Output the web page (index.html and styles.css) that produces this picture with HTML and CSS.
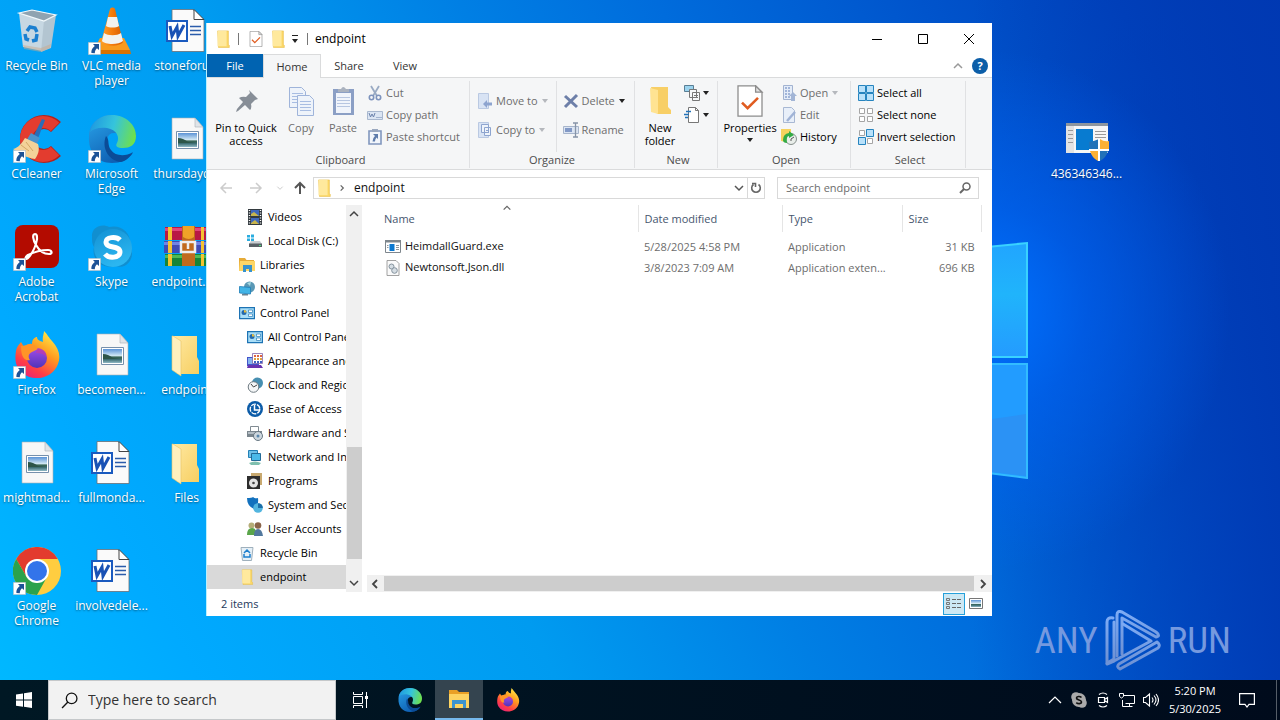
FILE: index.html
```html
<!DOCTYPE html>
<html lang="en">
<head>
<meta charset="UTF-8">
<meta name="viewport" content="width=device-width, initial-scale=1.0">
<title>endpoint</title>
<link rel="stylesheet" href="styles.css">
</head>
<body>

<!-- Icon sprite -->
<svg class="sprite" aria-hidden="true">
  <defs>
    <linearGradient id="gEdgeTop" x1="0" y1="0.3" x2="1" y2="0.5"><stop offset="0" stop-color="#1f9ae0"/><stop offset="0.5" stop-color="#35c4dc"/><stop offset="1" stop-color="#6fe04c"/></linearGradient>
    <linearGradient id="gEdgeMid" x1="0" y1="0" x2="0.6" y2="1"><stop offset="0" stop-color="#2aa4ea"/><stop offset="1" stop-color="#0d5cb0"/></linearGradient>
    <linearGradient id="gFox" x1="0.8" y1="0" x2="0.2" y2="1"><stop offset="0" stop-color="#fff04a"/><stop offset="0.4" stop-color="#ff9a1f"/><stop offset="0.75" stop-color="#ff3d47"/><stop offset="1" stop-color="#e6207e"/></linearGradient>
    <linearGradient id="gFoxGlobe" x1="0" y1="0" x2="0" y2="1"><stop offset="0" stop-color="#a04be8"/><stop offset="1" stop-color="#5034b8"/></linearGradient>
    <linearGradient id="gFolder" x1="0" y1="0" x2="1" y2="1"><stop offset="0" stop-color="#ffe9a3"/><stop offset="1" stop-color="#f7cf62"/></linearGradient>
    <linearGradient id="gSkype" x1="0" y1="0" x2="0.4" y2="1"><stop offset="0" stop-color="#1291d4"/><stop offset="1" stop-color="#2cb6f0"/></linearGradient>
    <linearGradient id="gPhoto" x1="0" y1="0" x2="0" y2="1"><stop offset="0" stop-color="#5b93d6"/><stop offset="0.5" stop-color="#d6ebf5"/><stop offset="0.56" stop-color="#35624f"/><stop offset="0.75" stop-color="#3f6f74"/><stop offset="1" stop-color="#8fb9c6"/></linearGradient>
    <linearGradient id="gCone" x1="0" y1="0" x2="1" y2="0"><stop offset="0" stop-color="#ffa02e"/><stop offset="0.5" stop-color="#f57c0a"/><stop offset="1" stop-color="#d65c00"/></linearGradient>
    <linearGradient id="gMark" x1="0" y1="0" x2="0" y2="1"><stop offset="0" stop-color="#7dabf5"/><stop offset="1" stop-color="#6d90d2"/></linearGradient>
  </defs>

  <symbol id="arrow" viewBox="0 0 13 13"><path fill="#fff" stroke="#9aa7b5" stroke-width=".6" d="M.3.3h12.4v12.4H.3z"/><path fill="#1d5296" d="M5 2h6v6L9 6.200C7.500 7.500 6.800 9 6.800 11.200L3.400 11C3 8 4.500 5.800 6.800 4z"/></symbol>

  <symbol id="recycle" viewBox="0 0 48 48"><path fill="#c6d7e2" d="m6 6 27 8-4 30-19-4z"/><path fill="#b3c5d1" d="m31 13 12-5-5 33-10 4z"/><path fill="#8fa3b1" stroke="#f2f8fb" stroke-width="1.200" d="M6 6 19 3l24 5-12 6z"/><path fill="#c9a98c" d="m10 38 18 3 10-4-1 4-9 4-17-3z" opacity=".5"/><g fill="none" stroke="#1a7fd0" stroke-width="3.500"><path d="m14 24 3-4 5 1 2 4"/><path d="m24 27-1 6-4 1"/><path d="m16 33-3-1-1-5"/></g></symbol>

  <symbol id="vlc" viewBox="0 0 48 48"><path fill="#f89a1c" d="m12 31-6 12h36l-6-12z"/><path fill="#d87200" d="M6 43h36l1 4H5z"/><path fill="url(#gCone)" d="M22 2c1-2 4-2 5 0l8 33c-4 5-18 5-22 0z"/><path fill="#f2f2ee" d="m20 10h9l2 9c-3 2-10 2-13 0zM16 26c4 3 13 3 17 0l2 8c-4 4-18 4-21 0z"/></symbol>

  <symbol id="word" viewBox="0 0 48 48"><path fill="#fafafa" stroke="#6b6f75" stroke-width=".8" d="M9 2.500h21l11 11v31H9z"/><path fill="#fff" stroke="#444" stroke-width="1" d="M31 2.500v10h10z"/><path stroke="#2b5cab" stroke-width="1.300" d="M27 19.500h11M27 23.500h11M27 27.500h11"/><path fill="#fff" stroke="#1a5abf" stroke-width="2" d="M4 14h20v20H4z"/><path fill="none" stroke="#1a52b5" stroke-width="3" d="m7 19 2 10 5-9 1 9 6-11"/></symbol>

  <symbol id="image" viewBox="0 0 48 48"><path fill="#f7f7f7" stroke="#aab0b5" stroke-width=".6" d="M9 3h23l8 9v32H9z"/><path fill="#e0e4e8" stroke="#aab0b5" stroke-width=".6" d="M32 3v9h8z"/><path fill="#fff" stroke="#7690ac" d="M13.500 16.500h22v17h-22z"/><path fill="url(#gPhoto)" d="M15 18h19v14H15z"/><path fill="#2d5548" d="M15 23q5 0 10 4l9 1H15z"/></symbol>

  <symbol id="ccleaner" viewBox="0 0 48 48"><path fill="none" stroke="#b3221c" stroke-width="14" d="M43 12A17 17 0 1 0 43 36"/><path fill="none" stroke="#e33c2f" stroke-width="12" d="M42 12A17 17 0 1 0 42 36"/><path fill="#2a6db8" d="m29 4 3 1-8 21-5-2z"/><path fill="#4b93cc" d="m18 18 9 5-4 7-10-4z"/><path fill="#f3d299" d="m12 23 13 6c2 6 0 11-3 15C13 43 6 38 0 34c5-1 9-6 12-11z"/><path fill="none" stroke="#d3a766" d="m8 30 8 6m-3-9 7 9"/></symbol>

  <symbol id="edge" viewBox="0 0 48 48"><path fill="url(#gEdgeMid)" d="M1 21C1 8 12 0 24 0c10 0 20 8 24 20l-22-2c-7 0-8 8-6 14 4 9 15 13 25 6-5 7-13 10-21 10C9 48 0 37 1 21z"/><path fill="url(#gEdgeTop)" d="M2 17C5 6 13 0 24 0c14 0 24 10 24 21 0 9-6 12-13 12-6 0-8-2-6-5 3-6 0-13-10-15-8-1-14 1-17 4z"/><path fill="#0b4c97" d="M18 21c-5 12 3 25 15 26 5-1 9-5 12-10-8 5-18 4-22-2-4-5-1-10-5-14z"/></symbol>

  <symbol id="acrobat" viewBox="0 0 48 48"><rect x="2" y="2" width="44" height="43" rx="8" fill="#b30b00"/><path fill="none" stroke="#fff" stroke-width="2.200" stroke-linejoin="round" d="M22 11c-3 0-2 6 1 11 4 7 9 9 13 9s3-4-1-4c-7 0-14 2-20 5-4 3-3 5 0 3 4-4 8-12 9-19 0-3 0-5-2-5z"/></symbol>

  <symbol id="skype" viewBox="0 0 48 48"><path fill="#118fd0" d="M4 14C3 4 14 0 21 4c13-3 23 7 21 19 6 10-2 24-14 20C14 47 3 36 6 24 4 21 4 18 4 14z"/><circle cx="25" cy="25" r="19" fill="url(#gSkype)"/><path fill="none" stroke="#fff" stroke-width="5" d="M32 17c-4-4-14-3-14 2 0 7 14 3 14 10 0 6-11 7-15 2"/></symbol>

  <symbol id="winrar" viewBox="0 0 48 48"><path fill="#b91945" d="M2 4h44v13H2z"/><path fill="#e2467b" d="M2 5h44v3H2z"/><path fill="#414bb5" d="M1 18h46v12H1z"/><path fill="#7284e4" d="M1 19h46v3H1z"/><path fill="#178438" d="M2 31h44v12H2z"/><path fill="#4fba55" d="M2 32h44v3H2z"/><path fill="#f4c332" d="M5 4h4v13H5zm0 14h4v12H5zm0 13h4v12H5zM38 4h3v13h-3zm0 14h3v12h-3zm0 13h3v12h-3z"/><path fill="#c16a1d" d="M19 3h13v40H19z"/><path fill="#f0a328" d="M20 3h11v11q-5 4-11 0z"/><path fill="none" stroke="#eee" stroke-width="2.500" d="M18 19h14v10H18zm7 1v6"/></symbol>

  <symbol id="firefox" viewBox="0 0 48 48"><path fill="url(#gFox)" d="M3 20C4 15 6 14 8 11l3 5q4-4 8-3c0-5 3-7 5-7 0 3 3 4 6 5-1-5 1-8 1-11 4 4 5 7 8 10 7 8 9 15 6 23-6 17-31 19-40 4-3-5-3-11-2-17z"/><circle cx="24" cy="27" r="10" fill="url(#gFoxGlobe)"/><path fill="#ff9527" d="M8 15c5 0 9-3 13-1l4 4-6 3c-4 2-4 5-2 8-5 1-9-2-9-14z"/><path fill="#c9389c" d="M24 18c6-1 10 3 9 8-2-3-5-4-10-4z" opacity=".6"/></symbol>

  <symbol id="chrome" viewBox="0 0 48 48"><circle cx="24" cy="24" r="24" fill="#ffcd40"/><path fill="#e33b2e" d="M3.200 12A24 24 0 0 1 44.800 12H24L13.600 30z"/><path fill="#2ba24c" d="M3.200 12 13.600 30 24 36l10-6L24 48A24 24 0 0 1 3.200 12z"/><circle cx="24" cy="24" r="12" fill="#fff"/><circle cx="24" cy="24" r="10" fill="#3374ea"/></symbol>

  <symbol id="folderopen" viewBox="0 0 48 48"><path fill="url(#gFolder)" d="M9 5h25v21l2 4v13H14z"/><path fill="#fff0be" stroke="#e5c264" stroke-width=".6" d="M9 5h1l8 5v35L9 39z"/></symbol>

  <symbol id="setup" viewBox="0 0 48 48"><path fill="#f6f6f6" d="M3 8h42v30H3z"/><path fill="#8e969e" d="M3 8h42v3H3z"/><path fill="#e3e3e3" d="M3 11h8v27H3z"/><path stroke="#9a9a9a" d="M5 15.500h5M5 19.500h5M5 23.500h5M5 27.500h5M32 16.500h11M32 19.500h11M32 22.500h11"/><path fill="#087bd0" d="M13 14h17v21H13z"/><path fill="#2272b8" d="M26 27q6-1 10-3v11h-9z"/><path fill="#fbb034" d="M37 24q4 3 9 2v9h-9zM27 36h8v10q-6-3-8-10z"/><path fill="#fff" d="M35 24h2v22h-2zm-9 10h20v2H26z"/><path fill="#2272b8" d="M37 36h8q-2 7-8 10z"/></symbol>

  <symbol id="folder" viewBox="0 0 16 20"><path fill="#fbd766" stroke="#e5b943" stroke-width=".6" d="M2 1h12v15l1 1v2.500H3z"/><path fill="#ffe99d" d="M2 1h10v17H2z"/></symbol>
  <symbol id="bigfolder" viewBox="0 0 32 32"><path fill="#f8cf66" d="M7 2h17v20l3 3v4H13z"/><path fill="#ffe392" d="m6 3 8 2v24l-7-2z"/></symbol>
  <symbol id="checkpage" viewBox="0 0 16 20"><path fill="#fff" stroke="#8c8c8c" stroke-width=".8" d="M.5.5h11l4 4v15H.5z"/><path fill="#e2e2e2" stroke="#8c8c8c" stroke-width=".8" d="M11.500.5v4h4z"/><path fill="none" stroke="#e05c20" stroke-width="1.600" d="m3 11 3.500 3.500L13 8"/></symbol>

  <symbol id="pin" viewBox="0 0 32 32"><path fill="#878e97" d="m19 5 9 9-3 1-4 4q1 4-1 6l-5-5-7 6-2 1 1-3 6-7-4-4q3-2 7-1l4-4z"/></symbol>
  <symbol id="copy" viewBox="0 0 32 32"><g fill="#eef3fa" stroke="#9fb4da"><path d="M4.500 2.500h12l4 4v16h-16z"/><path d="M12.500 10.500h12l4 4v16h-16z"/></g><path stroke="#a8bde2" d="M7 8.500h11M7 11.500h5M7 14.500h5M7 17.500h5M15 16.500h11M15 19.500h11M15 22.500h11M15 25.500h11"/></symbol>
  <symbol id="paste" viewBox="0 0 32 32"><path fill="#8b9fc5" d="M6 4h21v26H6z"/><path fill="#f0f4fb" d="M9 8h15v20H9z"/><path fill="#aab2bf" d="M11 7V4h3q2-4 5 0h3v3z"/><path stroke="#b7c6e1" d="M10 12.500h13M10 15.500h13M10 18.500h13M10 21.500h13"/></symbol>
  <symbol id="cut" viewBox="0 0 16 16"><path fill="none" stroke="#9aabc4" stroke-width="1.800" d="m4 1 6 10M12 1 6 11"/><g fill="none" stroke="#7d93bd" stroke-width="1.600"><circle cx="4.500" cy="12.500" r="2.200"/><circle cx="11.500" cy="12.500" r="2.200"/></g></symbol>
  <symbol id="path" viewBox="0 0 16 16"><path fill="#dbe5f3" stroke="#a9b8cf" d="M.5 4.500h15v8H.5z"/><path fill="none" stroke="#6b82ac" d="m2 6 1.500 4L5 7l1.500 3L8 6m1.500 4.500h1m1 0h1m1 0h1"/></symbol>
  <symbol id="pasteshort" viewBox="0 0 16 16"><path fill="#f2f6fc" stroke="#8197bd" stroke-width="1.600" d="M2 2h12v13H2z"/><path fill="#9aa8bf" d="M5 0h6v3H5z"/><path fill="#5e7cac" d="M6 5h5v5L9.500 8.500Q8 10 8 12.500H5.500Q5.500 9 8 7z"/></symbol>
  <symbol id="moveto" viewBox="0 0 16 16"><path fill="#d8e3f4" stroke="#bac9e2" d="M1.500.5h10v15h-10z"/><path fill="#8da4cf" d="m6 11 4-4v2.500h5v3h-5V15z"/></symbol>
  <symbol id="copyto" viewBox="0 0 16 16"><path fill="#d8e3f4" stroke="#bac9e2" d="M1.500.5h10v15h-10z"/><path fill="#eef3fa" stroke="#8da4cf" d="M4.500 2.500h7v8h-7zM7.500 5.500h6v8h-6zM9 8.500h3m-3 2h3"/></symbol>
  <symbol id="delete" viewBox="0 0 16 16"><path stroke="#6d7fa8" stroke-width="3" d="m2 3 12 11M14 2 2 14"/></symbol>
  <symbol id="rename" viewBox="0 0 16 16"><path fill="#dce5f3" stroke="#a7b5cb" d="M.5 4.500h15v7H.5z"/><path fill="#8299c6" d="M2 6h7v4H2z"/><path fill="none" stroke="#8794a8" stroke-width="1.300" d="M10 1h5M10 15h5M12.500 1v14"/></symbol>
  <symbol id="newitem" viewBox="0 0 16 16"><path fill="#9bd3ee" stroke="#5a7e94" d="M.5.500h9v6h-9z"/><path fill="#f6f8fa" stroke="#777" d="M5.500 4.500h7v8h-7zM8.500 7.500h7v8h-7zM10 10.500h4m-4 2h4"/></symbol>
  <symbol id="easy" viewBox="0 0 16 16"><path fill="#fff" stroke="#777" d="M4.500.5h7l3 3v12h-10z"/><path fill="none" stroke="#777" d="M11.500.5v3h3"/><path stroke="#2272b8" stroke-width="1.300" d="M2 4.500h5M0 7.500h5M1 10.500h3"/></symbol>
  <symbol id="open" viewBox="0 0 16 16"><path fill="#e4ecf8" stroke="#a2b3d1" d="M2.500.5h9v14h-9z"/><path stroke="#8aa2ce" stroke-width="1.500" stroke-dasharray="2 1" d="M4 3h6M4 6h6M4 9h6M4 12h6"/><path fill="#a2b5d6" d="m12 7 4 4h-2v5h-4v-5H8z"/></symbol>
  <symbol id="edit" viewBox="0 0 16 16"><path fill="#e8eff9" stroke="#a8b8d3" d="M2.500.5h8l3 3v12h-11z"/><path stroke="#a0b3d6" stroke-width="2.500" d="m6 14 8-9"/></symbol>
  <symbol id="history" viewBox="0 0 16 16"><path fill="#f6d25e" d="M0 0h10v14L0 12z"/><circle cx="10" cy="10" r="5.500" fill="#e9eeea" stroke="#868f8c"/><path fill="#33ab45" d="M2 11q0-6 6-7V2l5 4-5 3V7q-3 0-2 7-4 0-4-3z"/><path stroke="#555" d="m10 10 3-2m-3 2v2"/></symbol>
  <symbol id="selall" viewBox="0 0 16 16"><path fill="#b9e1fa" stroke="#2684bf" d="M.5.5h7v7h-7zM8.500.5h7v7h-7zM.5 8.500h7v7h-7zM8.500 8.500h7v7h-7z"/></symbol>
  <symbol id="selnone" viewBox="0 0 16 16"><path fill="#fff" stroke="#a5a5a5" d="M1.500 1.500h5v5h-5zM9.500 1.500h5v5h-5zM1.500 9.500h5v5h-5zM9.500 9.500h5v5h-5z"/></symbol>
  <symbol id="selinv" viewBox="0 0 16 16"><path fill="#fff" stroke="#a5a5a5" d="M1.500 1.500h5v5h-5zM9.500 9.500h5v5h-5z"/><path fill="#b9e1fa" stroke="#2684bf" d="M8.500.5h7v7h-7zM.5 8.500h7v7h-7z"/></symbol>

  <symbol id="videos" viewBox="0 0 16 16"><path fill="#333a3f" d="M1 0h14v16H1z"/><path fill="#3f68bc" d="M4 1h8v6H4zM4 9h8v6H4z"/><path fill="#c8b54c" d="m4 5 3-2 5 4H4zm0 9 4-3 4 4H4z"/><path stroke="#fff" stroke-width="1.400" stroke-dasharray="1 1.500" d="M2.500 1v15M13.500 1v15"/></symbol>
  <symbol id="disk" viewBox="0 0 16 16"><path fill="#2aade0" d="M0 2h3v2.500H0zM4 1.500h3v3H4zM0 5.500h3V8H0zM4 5.500h3v3H4z"/><path fill="#c9cdd1" d="M4 8h9l2 3H2z"/><path fill="#596066" d="M2 10.500h13V14H2z"/><path fill="#4be07a" d="M12 12h2v1h-2z"/></symbol>
  <symbol id="libs" viewBox="0 0 16 16"><path fill="#e6ab38" d="M0 1h6l1.500 2H15v11H0z"/><path fill="#fdd667" d="M1 4h15v10H0z"/><path fill="#3692ce" d="M4 8h9v7h-3v-3H7v3H4z"/></symbol>
  <symbol id="network" viewBox="0 0 16 16"><circle cx="10.500" cy="6" r="5.500" fill="#5a98b5"/><path fill="#a7d9e2" d="m8 2 4-1-1 4z"/><path fill="#42b4e6" stroke="#1c7db8" stroke-width=".8" d="m.5 5.500 11 1v6.500l-11-1z"/><path fill="#6b8492" d="M3 13h6v1.500H3z"/></symbol>
  <symbol id="cpanel" viewBox="0 0 16 16"><path fill="#a9def7" stroke="#1d73b4" stroke-width="1.200" d="M.6 2.600h14.800v11H.6z"/><circle cx="5" cy="7.500" r="2.500" fill="#2469ad"/><path fill="#e9bd3d" d="M5 7.500V5a2.500 2.500 0 0 1 2.500 2.500z"/><path fill="#fff" stroke="#2b7fbb" stroke-width=".7" d="M9.500 5h4v2.500h-4zM9.500 9h4v2.500h-4z"/></symbol>
  <symbol id="appear" viewBox="0 0 16 16"><path fill="#4254ca" d="M0 4h12v9H0z"/><path fill="#86b4ee" d="M1 5h9v6H1z"/><path fill="#fff" stroke="#72539d" stroke-width=".7" d="M5.500.5h10v10h-10z"/><path stroke="#df6542" stroke-width="2" stroke-dasharray="2 1" d="M7 3h8"/><path stroke="#e0a040" stroke-width="2" stroke-dasharray="2 1" d="M7 6h8"/><path stroke="#3c62c4" stroke-width="2" stroke-dasharray="2 1" d="M7 9h8"/><path fill="#6733b0" d="M1 12h13l2 3H0z"/></symbol>
  <symbol id="clock" viewBox="0 0 16 16"><circle cx="10.500" cy="6" r="5.500" fill="#478fb1"/><circle cx="6.500" cy="10" r="5.300" fill="#f4f6f7" stroke="#6f7b82"/><path fill="none" stroke="#444" d="m4 7 2.500 3L10 8"/></symbol>
  <symbol id="ease" viewBox="0 0 16 16"><circle cx="8" cy="8" r="8" fill="#0c5ca8"/><circle cx="8" cy="8" r="4.800" fill="none" stroke="#fff" stroke-width="1.300" stroke-dasharray="5 1"/><path fill="none" stroke="#fff" stroke-width="1.500" d="M7.500 4v5h5"/></symbol>
  <symbol id="hardware" viewBox="0 0 16 16"><path fill="#fff" stroke="#818b92" d="M3.500 1.500h8v5h-8z"/><path fill="#7b868e" d="M0 6h15v6H0z"/><path fill="#b4bdc4" d="M1 7h8v2H1z"/><circle cx="11" cy="11" r="4.500" fill="#ced7de" stroke="#687782"/><circle cx="11" cy="11" r="1.500" fill="#5a87ac"/></symbol>
  <symbol id="netint" viewBox="0 0 16 16"><path fill="#6fc1e9" stroke="#2380b6" d="M1.500 1.500h9v7h-9z"/><path fill="#4bb9e8" stroke="#246b97" d="M4.500 4.500h9v7h-9z"/><path fill="#7fbfae" d="M2 14q6-3 12 0l-2 2H4z"/></symbol>
  <symbol id="programs" viewBox="0 0 16 16"><path fill="#c8a970" d="M4 0h11v12H4z"/><path fill="#2d2d2d" d="M0 3h13v13H0z"/><circle cx="6.500" cy="10" r="4.500" fill="#e4e4e4"/><circle cx="6.500" cy="10" r="1.300" fill="#444"/></symbol>
  <symbol id="syssec" viewBox="0 0 16 16"><path fill="#1271be" d="M0 1q5 0 6-1 2 2 5 1 1 8-4 11Q0 9 0 1z"/><circle cx="11" cy="11" r="4.800" fill="#52b5df"/><path fill="#1d6fa8" d="M11 11V6.200A4.800 4.800 0 0 1 15.800 11z"/></symbol>
  <symbol id="users" viewBox="0 0 16 16"><circle cx="4.500" cy="4.500" r="3" fill="#b5ad78"/><path fill="#5aa54a" d="M0 14q0-7 5-7t4 7z"/><circle cx="11" cy="4.500" r="3.300" fill="#8a6449"/><path fill="#52789e" d="M7 15q0-7 4-7t5 7z"/></symbol>
  <symbol id="rbin" viewBox="0 0 16 16"><path fill="#e6f0f7" stroke="#9fb0bc" d="m2 2.500 12 0-1.500 13h-9z"/><path fill="none" stroke="#1d7fce" stroke-width="1.500" d="m5 8 3-3 3 3m-6 1v3h6V9"/></symbol>
  <symbol id="exe" viewBox="0 0 16 14"><path fill="#fff" stroke="#7e868d" d="M.5.500h15v12H.5z"/><path fill="#7e868d" d="M0 0h16v2.500H0z"/><path fill="#0b78d0" d="M4.500 4h5v7h-5z"/><path stroke="#8f969c" d="M11 5.500h3m-3 2h3m-3 2h3M2 5.500h1.500m-1.500 2h1.500"/></symbol>
  <symbol id="dll" viewBox="0 0 16 16"><path fill="#fafafa" stroke="#8b8b8b" stroke-width=".8" d="M2 .5h9l3 3v12H2z"/><g fill="#d5dde3" stroke="#84929d"><circle cx="6.500" cy="6.500" r="2.500"/><circle cx="9.500" cy="10.500" r="2.800"/></g></symbol>

  <symbol id="chevup" viewBox="0 0 12 12"><path fill="none" stroke="currentColor" stroke-width="1.500" d="m2 8 4-4 4 4"/></symbol>
  <symbol id="chevdown" viewBox="0 0 12 12"><path fill="none" stroke="currentColor" stroke-width="1.500" d="m2 4 4 4 4-4"/></symbol>
  <symbol id="chevleft" viewBox="0 0 12 12"><path fill="none" stroke="currentColor" stroke-width="1.800" d="M8 2 4 6l4 4"/></symbol>
  <symbol id="chevright" viewBox="0 0 12 12"><path fill="none" stroke="currentColor" stroke-width="1.800" d="m4 2 4 4-4 4"/></symbol>
  <symbol id="left" viewBox="0 0 16 16"><path fill="none" stroke="currentColor" stroke-width="1.500" d="M14 8H3m5-5L3 8l5 5"/></symbol>
  <symbol id="right" viewBox="0 0 16 16"><path fill="none" stroke="currentColor" stroke-width="1.500" d="M2 8h11M8 3l5 5-5 5"/></symbol>
  <symbol id="up" viewBox="0 0 16 16"><path fill="none" stroke="currentColor" stroke-width="2" d="M8 14V3M3 8l5-5 5 5"/></symbol>
  <symbol id="mag" viewBox="0 0 16 16"><circle cx="9.500" cy="6.500" r="3.500" fill="none" stroke="currentColor" stroke-width="1.500"/><path stroke="currentColor" stroke-width="2" d="m7 9-4 4"/></symbol>
  <symbol id="taskexp" viewBox="0 0 24 24"><path fill="#e9a026" d="M2 3h8l2 2h10v4H2z"/><path fill="#fdd361" d="M2 7h20v14H2z"/><path fill="#3b93cf" d="M5 13h14v8h-3v-4H8v4H5z"/></symbol>
</svg>

<main class="desktop">
  <svg class="wall-logo" viewBox="0 0 36 238" aria-hidden="true">
    <defs><linearGradient id="gPane" x1="0" y1="0" x2="0" y2="1"><stop offset="0" stop-color="#21a5ff"/><stop offset="0.450" stop-color="#20b4fb"/><stop offset="1" stop-color="#249bff"/></linearGradient></defs>
    <path fill="url(#gPane)" stroke="#39d2ff" stroke-width="2" d="M-4 6 35 2v114H-4z"/>
    <path fill="#229cff" stroke="#32bcff" stroke-width="2" d="M-4 123h39v114l-39-5z"/>
    <path fill="#2b92f5" d="M0 178 34 173v62l-34-4z"/>
  </svg>

  <div class="icons">
    <a class="icon" href="#"><svg><use href="#recycle"/></svg><span>Recycle Bin</span></a>
    <a class="icon shortcut" href="#"><svg><use href="#ccleaner"/></svg><svg class="arrow"><use href="#arrow"/></svg><span>CCleaner</span></a>
    <a class="icon shortcut" href="#"><svg><use href="#acrobat"/></svg><svg class="arrow"><use href="#arrow"/></svg><span>Adobe Acrobat</span></a>
    <a class="icon shortcut" href="#"><svg><use href="#firefox"/></svg><svg class="arrow"><use href="#arrow"/></svg><span>Firefox</span></a>
    <a class="icon" href="#"><svg><use href="#image"/></svg><span>mightmad...</span></a>
    <a class="icon shortcut" href="#"><svg><use href="#chrome"/></svg><svg class="arrow"><use href="#arrow"/></svg><span>Google Chrome</span></a>

    <a class="icon shortcut" href="#"><svg><use href="#vlc"/></svg><svg class="arrow"><use href="#arrow"/></svg><span>VLC media player</span></a>
    <a class="icon shortcut" href="#"><svg><use href="#edge"/></svg><svg class="arrow"><use href="#arrow"/></svg><span>Microsoft Edge</span></a>
    <a class="icon shortcut" href="#"><svg><use href="#skype"/></svg><svg class="arrow"><use href="#arrow"/></svg><span>Skype</span></a>
    <a class="icon" href="#"><svg><use href="#image"/></svg><span>becomeen...</span></a>
    <a class="icon" href="#"><svg><use href="#word"/></svg><span>fullmonda...</span></a>
    <a class="icon" href="#"><svg><use href="#word"/></svg><span>involvedele...</span></a>

    <a class="icon" href="#"><svg><use href="#word"/></svg><span>stoneforu...</span></a>
    <a class="icon" href="#"><svg><use href="#image"/></svg><span>thursdayd...</span></a>
    <a class="icon" href="#"><svg><use href="#winrar"/></svg><span>endpoint.zip</span></a>
    <a class="icon" href="#"><svg><use href="#folderopen"/></svg><span>endpoint</span></a>
    <a class="icon" href="#"><svg><use href="#folderopen"/></svg><span>Files</span></a>
    <a class="icon sample" href="#"><svg><use href="#setup"/></svg><span>436346346...</span></a>
  </div>

  <!-- Explorer window -->
  <section class="window">
    <header class="titlebar">
      <svg class="i18"><use href="#folder"/></svg>
      <i class="bar"></i>
      <button aria-label="Properties"><svg class="i16"><use href="#checkpage"/></svg></button>
      <button aria-label="New folder"><svg class="i18"><use href="#folder"/></svg></button>
      <button class="customize" aria-label="Customize"><i class="caret"></i></button>
      <i class="bar"></i>
      <h1>endpoint</h1>
      <div class="controls">
        <button aria-label="Minimize"><svg viewBox="0 0 12 12"><path stroke="#000" d="M1 6.500h10"/></svg></button>
        <button aria-label="Maximize"><svg viewBox="0 0 12 12"><path fill="none" stroke="#000" d="M1.500 1.500h9v9h-9z"/></svg></button>
        <button aria-label="Close"><svg viewBox="0 0 12 12"><path stroke="#000" d="m1 1 10 10M11 1 1 11"/></svg></button>
      </div>
    </header>

    <nav class="tabs">
      <button class="tab file">File</button>
      <button class="tab active">Home</button>
      <button class="tab">Share</button>
      <button class="tab">View</button>
      <button class="collapse" aria-label="Collapse ribbon"><svg class="i12"><use href="#chevup"/></svg></button>
      <button class="help" aria-label="Help">?</button>
    </nav>

    <div class="ribbon">
      <div class="group clipboard">
        <div class="tools">
          <button class="big wide"><svg><use href="#pin"/></svg>Pin to Quick access</button>
          <button class="big off"><svg><use href="#copy"/></svg>Copy</button>
          <button class="big off"><svg><use href="#paste"/></svg>Paste</button>
          <div class="stack">
            <button class="small off"><svg><use href="#cut"/></svg>Cut</button>
            <button class="small off"><svg><use href="#path"/></svg>Copy path</button>
            <button class="small off"><svg><use href="#pasteshort"/></svg>Paste shortcut</button>
          </div>
        </div>
        <h2>Clipboard</h2>
      </div>
      <div class="group organize">
        <div class="tools">
          <div class="stack loose">
            <button class="small off"><svg><use href="#moveto"/></svg>Move to<i class="caret"></i></button>
            <button class="small off"><svg><use href="#copyto"/></svg>Copy to<i class="caret"></i></button>
          </div>
          <div class="stack loose ruled">
            <button class="small off"><svg><use href="#delete"/></svg>Delete<i class="caret dark"></i></button>
            <button class="small off"><svg><use href="#rename"/></svg>Rename</button>
          </div>
        </div>
        <h2>Organize</h2>
      </div>
      <div class="group new">
        <div class="tools">
          <button class="big"><svg><use href="#bigfolder"/></svg>New folder</button>
          <div class="stack">
            <button class="small tight" aria-label="New item"><svg><use href="#newitem"/></svg><i class="caret"></i></button>
            <button class="small tight" aria-label="Easy access"><svg><use href="#easy"/></svg><i class="caret"></i></button>
          </div>
        </div>
        <h2>New</h2>
      </div>
      <div class="group open">
        <div class="tools">
          <button class="big props"><svg><use href="#checkpage"/></svg>Properties<i class="caret"></i></button>
          <div class="stack">
            <button class="small off"><svg><use href="#open"/></svg>Open<i class="caret"></i></button>
            <button class="small off"><svg><use href="#edit"/></svg>Edit</button>
            <button class="small"><svg><use href="#history"/></svg>History</button>
          </div>
        </div>
        <h2>Open</h2>
      </div>
      <div class="group select">
        <div class="tools">
          <div class="stack">
            <button class="small"><svg><use href="#selall"/></svg>Select all</button>
            <button class="small"><svg><use href="#selnone"/></svg>Select none</button>
            <button class="small"><svg><use href="#selinv"/></svg>Invert selection</button>
          </div>
        </div>
        <h2>Select</h2>
      </div>
    </div>

    <div class="location">
      <button class="dim" aria-label="Back"><svg class="i16"><use href="#left"/></svg></button>
      <button class="dim" aria-label="Forward"><svg class="i16"><use href="#right"/></svg></button>
      <button class="dim recent" aria-label="Recent locations"><svg><use href="#chevdown"/></svg></button>
      <button aria-label="Up"><svg class="i16"><use href="#up"/></svg></button>
      <div class="address">
        <svg class="i18"><use href="#folder"/></svg>
        <svg class="sep"><use href="#chevright"/></svg>
        <span>endpoint</span>
        <button class="drop" aria-label="Previous locations"><svg class="i12"><use href="#chevdown"/></svg></button>
        <button class="refresh" aria-label="Refresh"><svg class="i12" viewBox="0 0 12 12"><path fill="none" stroke="#666" stroke-width="1.600" d="M8.500 2.500a4.300 4.300 0 1 1-5 0M2 1.500h3.500V5"/></svg></button>
      </div>
      <div class="search">
        <input type="text" aria-label="Search endpoint" placeholder="Search endpoint">
        <svg class="i16"><use href="#mag"/></svg>
      </div>
    </div>

    <div class="content">
      <nav class="tree">
        <ul>
          <li class="sub"><svg><use href="#videos"/></svg>Videos</li>
          <li class="sub"><svg><use href="#disk"/></svg>Local Disk (C:)</li>
          <li><svg><use href="#libs"/></svg>Libraries</li>
          <li><svg><use href="#network"/></svg>Network</li>
          <li><svg><use href="#cpanel"/></svg>Control Panel</li>
          <li class="sub"><svg><use href="#cpanel"/></svg>All Control Panel Items</li>
          <li class="sub"><svg><use href="#appear"/></svg>Appearance and Personalization</li>
          <li class="sub"><svg><use href="#clock"/></svg>Clock and Region</li>
          <li class="sub"><svg><use href="#ease"/></svg>Ease of Access</li>
          <li class="sub"><svg><use href="#hardware"/></svg>Hardware and Sound</li>
          <li class="sub"><svg><use href="#netint"/></svg>Network and Internet</li>
          <li class="sub"><svg><use href="#programs"/></svg>Programs</li>
          <li class="sub"><svg><use href="#syssec"/></svg>System and Security</li>
          <li class="sub"><svg><use href="#users"/></svg>User Accounts</li>
          <li><svg><use href="#rbin"/></svg>Recycle Bin</li>
          <li class="selected"><svg><use href="#folder"/></svg>endpoint</li>
        </ul>
        <div class="vscroll">
          <svg class="i12"><use href="#chevup"/></svg>
          <i class="track"><i class="thumb"></i></i>
          <svg class="i12"><use href="#chevdown"/></svg>
        </div>
      </nav>

      <div class="files">
        <table>
          <thead>
            <tr>
              <th class="name">Name<svg class="sort"><use href="#chevup"/></svg></th>
              <th class="date">Date modified</th>
              <th class="type">Type</th>
              <th class="size">Size</th>
            </tr>
          </thead>
          <tbody>
            <tr>
              <td><svg><use href="#exe"/></svg>HeimdallGuard.exe</td>
              <td>5/28/2025 4:58 PM</td>
              <td>Application</td>
              <td>31 KB</td>
            </tr>
            <tr>
              <td><svg><use href="#dll"/></svg>Newtonsoft.Json.dll</td>
              <td>3/8/2023 7:09 AM</td>
              <td>Application exten...</td>
              <td>696 KB</td>
            </tr>
          </tbody>
        </table>
        <div class="hscroll">
          <svg class="i12"><use href="#chevleft"/></svg>
          <i class="thumb"></i>
          <svg class="i12"><use href="#chevright"/></svg>
        </div>
      </div>
    </div>

    <footer class="status">
      <span>2 items</span>
      <button class="on" aria-label="Details view"><svg viewBox="0 0 16 14"><path fill="none" stroke="#777" d="M.5 1.500h3v2h-3zM.5 5.500h3v2h-3zM.5 9.500h3v2h-3z"/><path stroke="#666" stroke-dasharray="4 1" d="M6 2.500h9M6 6.500h9M6 10.500h9"/></svg></button>
      <button aria-label="Large icons"><svg viewBox="0 0 16 14"><path fill="#fff" stroke="#777" d="M1.500 1.500h13v10h-13z"/><path fill="url(#gPhoto)" d="M3 3h10v7H3z"/></svg></button>
    </footer>
  </section>

  <div class="watermark">
    <span>ANY</span>
    <svg viewBox="0 0 56 62" aria-hidden="true"><g fill="none" stroke="url(#gMark)" stroke-width="3" stroke-linejoin="round" stroke-linecap="round"><path d="M8 8q-6-1-6 4v41l7-4V12"/><path d="M12 46V5q0-5 5-3l34 20q5 4 0 5L17 8v36"/><path d="M9 51 46 31 18 14M2 54l7-3M15 59l38-21q3-3-1-6L14 54q-3 3 1 5z"/></g></svg>
    <span>RUN</span>
  </div>
</main>

<footer class="taskbar">
  <button class="start" aria-label="Start"><svg class="i16" viewBox="0 0 16 16"><path fill="#fff" d="M0 2.500 7 1.400v6.200H0zM8 1.300 16 0v7.600H8zM0 8.500h7v6.200l-7-1zM8 8.500h8V16l-8-1.200z"/></svg></button>
  <div class="tasksearch">
    <svg viewBox="0 0 16 16"><circle cx="10" cy="6" r="5" fill="none" stroke="#111" stroke-width="1.200"/><path stroke="#111" stroke-width="1.300" d="M6.500 9.500 1 15"/></svg>
    <input type="text" aria-label="Search" placeholder="Type here to search">
  </div>
  <button class="app" aria-label="Task View"><svg class="i16" viewBox="0 0 16 16"><path fill="none" stroke="#fff" d="M.5 0v2.500h9V0M.5 4.500h9v7h-9zM.5 16v-2.500h9V16M13.500 0v16"/><path fill="#fff" d="M12 4h3v3h-3z"/></svg></button>
  <button class="app" aria-label="Microsoft Edge"><svg><use href="#edge"/></svg></button>
  <button class="app running" aria-label="File Explorer"><svg><use href="#taskexp"/></svg></button>
  <button class="app" aria-label="Firefox"><svg><use href="#firefox"/></svg></button>

  <div class="tray">
    <button aria-label="Show hidden icons"><svg viewBox="0 0 16 16"><path fill="none" stroke="#fff" stroke-width="1.200" d="m2 11 6-6 6 6"/></svg></button>
    <button aria-label="Skype"><svg viewBox="0 0 16 16"><circle cx="5" cy="5" r="4.800" fill="#aaa"/><circle cx="11" cy="11" r="4.800" fill="#aaa"/><circle cx="8" cy="8" r="7" fill="#aaa"/><path fill="none" stroke="#111" stroke-width="1.700" d="M10.500 5.500C9 4 5.500 4.200 5.500 6c0 2.500 5 1.400 5 4 0 2-3.500 2.200-5.200.6"/></svg></button>
    <button aria-label="Meet Now"><svg viewBox="0 0 16 16"><path fill="none" stroke="#fff" stroke-width="1.200" d="M3.500 5.500h6v5h-6zM9.500 7.500l3-2v5l-3-2M4 2.500q4-3 8 0M4 13.500q4 3 8 0"/></svg></button>
    <button aria-label="Network"><svg viewBox="0 0 16 16"><path fill="none" stroke="#fff" d="M4.500 3.500h11v8h-9M3.500 8v6.500h10M10.500 11.500v3M.5 1.500h4v3l-2 1.500-2-1.500z"/></svg></button>
    <button aria-label="Volume"><svg viewBox="0 0 16 16"><path fill="none" stroke="#fff" stroke-width="1.100" d="M.5 5.500h2l4-3.500v12l-4-3.500h-2zM9 5.500q2 2.500 0 5M11 3.500q4 4.500 0 9M13 2q5 6 0 12"/></svg></button>
    <time>5:20 PM<br>5/30/2025</time>
    <button class="notify" aria-label="Notifications"><svg viewBox="0 0 16 16"><path fill="none" stroke="#fff" stroke-width="1.200" d="M.6 1.600h14.800v10.800H10L8 15l-2-2.600H.6z"/></svg></button>
    <i class="peek"></i>
  </div>
</footer>

</body>
</html>
```
FILE: styles.css
```css
* {
  box-sizing: border-box;
}
body {
  margin: 0;
  height: 100vh;
  display: flex;
  flex-direction: column;
  overflow: hidden;
  font-family: "Open Sans", "Noto Sans", sans-serif;
  font-size: 11px;
  line-height: 16px;
}
button {
  padding: 0;
  border: 0;
  background: none;
  font: inherit;
  color: inherit;
}
input {
  border: 0;
  outline: 0;
  background: none;
  font: inherit;
  min-width: 0;
}
h1, h2 {
  margin: 0;
  font-size: 11px;
  font-weight: normal;
}
svg {
  display: block;
  flex: none;
}
.sprite {
  position: absolute;
  width: 0;
  height: 0;
}
.i18 {
  width: 16px;
  height: 18px;
}
.i16 {
  width: 16px;
  height: 16px;
}
.i12 {
  width: 12px;
  height: 12px;
}
.caret {
  flex: none;
  width: 0;
  height: 0;
  border: 3px solid transparent;
  border-top: 4px solid #222;
  border-bottom: 0;
}

/* desktop */
.desktop {
  flex: 1;
  position: relative;
  overflow: hidden;
  background:
    radial-gradient(ellipse 240px 260px at 990px 310px, rgba(0, 112, 255, 0.95), rgba(0, 104, 255, 0.5) 40%, rgba(0, 100, 255, 0) 100%),
    linear-gradient(to left, rgba(0, 56, 178, 0.85), rgba(0, 64, 190, 0) 24%),
    linear-gradient(62deg, #00b8ff 0%, #00aaff 12%, #00a2f6 24%, #009bf0 34%, #007fe4 50%, #006cdc 62%, #0054cc 78%, #0044be 90%, #003cb4 100%);
}
.wall-logo {
  position: absolute;
  left: 992px;
  top: 241px;
  width: 36px;
  height: 238px;
}
.icons {
  display: grid;
  grid-auto-flow: column;
  grid-template-rows: repeat(6, 108px);
  grid-auto-columns: 75px;
  margin-left: -1px;
}
.icon {
  position: relative;
  display: flex;
  flex-direction: column;
  align-items: center;
  padding-top: 7px;
  color: #fff;
  text-align: center;
  text-decoration: none;
  font-size: 12px;
  line-height: 15px;
  text-shadow: 0 1px 2px rgba(0, 0, 0, 0.5);
}
.icon svg {
  width: 48px;
  height: 48px;
  margin-bottom: 3px;
}
.icon .arrow {
  position: absolute;
  left: 14px;
  top: 42px;
  width: 13px;
  height: 13px;
}
.sample {
  grid-column: 15;
  grid-row: 2;
}
.watermark {
  position: absolute;
  right: 49px;
  bottom: 8px;
  display: flex;
  align-items: center;
  gap: 7px;
  font-family: "Roboto Condensed", "Liberation Sans Narrow", Roboto, sans-serif;
  font-size: 37px;
  line-height: 40px;
  color: #7599df;
}
.watermark svg {
  width: 56px;
  height: 62px;
}

/* explorer window */
.window {
  position: absolute;
  left: 206px;
  top: 23px;
  width: 786px;
  height: 593px;
  display: flex;
  flex-direction: column;
  background: #fff;
  border-left: 1px solid #b8f0ff;
}
.titlebar {
  height: 31px;
  display: flex;
  align-items: center;
  padding-left: 8px;
}
.titlebar .bar {
  width: 1px;
  height: 12px;
  margin: 0 9px 0 7px;
  background: #777;
}
.titlebar .customize + .bar {
  margin: 0 7px 0 9px;
}
.titlebar button + button {
  margin-left: 6px;
}
.titlebar h1, .address, .tab {
  font-size: 12px;
}
.titlebar .customize {
  padding: 3px 0 0;
  border-top: 1px solid #222;
}
.titlebar .customize .caret {
  display: block;
}
.controls {
  display: flex;
  margin-left: auto;
}
.controls button, .titlebar .controls button + button {
  width: 46px;
  height: 30px;
  margin: 0;
  display: flex;
  align-items: center;
  justify-content: center;
}
.controls svg {
  width: 12px;
  height: 12px;
}
.tabs {
  height: 24px;
  display: flex;
  align-items: center;
  padding-right: 4px;
  border-bottom: 1px solid #dadbdc;
}
.tab {
  width: 56px;
  height: 23px;
  font-size: 11px;
  color: #333;
}
.tab.file {
  background: #0063b1;
  color: #fff;
}
.tab.active {
  width: 58px;
  height: 24px;
  margin-bottom: -1px;
  background: #f5f6f7;
  border: 1px solid #dadbdc;
  border-bottom: 0;
}
.collapse {
  margin-left: auto;
  color: #999;
}
.help {
  width: 16px;
  height: 16px;
  margin-left: 8px;
  border-radius: 50%;
  background: #0c5ea8;
  color: #fff;
  font-weight: bold;
}
.ribbon {
  display: flex;
  height: 92px;
  padding: 3px 0 1px;
  background: #f5f6f7;
  border-bottom: 1px solid #dadbdc;
}
.group {
  display: flex;
  flex-direction: column;
  border-right: 1px solid #e0e1e3;
}
.group h2 {
  text-align: center;
  color: #4c4c4c;
}
.tools {
  flex: 1;
  display: flex;
}
.clipboard {
  width: 263px;
  padding-left: 5px;
}
.organize {
  width: 165px;
}
.new {
  width: 83px;
  padding-left: 4px;
}
.open {
  width: 133px;
  padding-left: 4px;
}
.select {
  width: 115px;
  padding-left: 4px;
}
.big {
  width: 42px;
  padding-top: 4px;
  display: flex;
  flex-direction: column;
  align-items: center;
  line-height: 13px;
}
.big svg {
  width: 32px;
  height: 32px;
  margin-bottom: 4px;
}
.wide {
  width: 68px;
}
.props {
  width: 56px;
}
.props .caret {
  margin-top: 4px;
}
.off {
  color: #6d6d6d;
}
.stack {
  display: flex;
  flex-direction: column;
  padding: 1px 0 0 3px;
}
.small {
  display: flex;
  align-items: center;
  height: 22px;
  white-space: nowrap;
}
.small svg {
  width: 16px;
  height: 16px;
  margin-right: 3px;
}
.small .caret {
  margin-left: 4px;
}
.small.off .caret {
  border-top-color: #b5b8bd;
}
.small.off .caret.dark {
  border-top-color: #222;
}
.small.tight .caret {
  margin-left: 0;
}
.loose {
  padding: 9px 8px 0 7px;
  gap: 7px;
}
.ruled {
  padding-left: 6px;
  border-left: 1px solid #e0e1e3;
}
.location {
  height: 35px;
  display: flex;
  align-items: center;
  padding: 0 13px 0 11px;
  color: #555;
}
.location > button {
  margin-right: 14px;
}
.location > .recent {
  margin-right: 8px;
}
.location > .dim + .recent {
  margin-left: -2px;
}
.location > .recent svg {
  width: 8px;
  height: 8px;
}
.location > .recent + button {
  margin-right: 5px;
}
.dim {
  color: #ccc;
}
.address {
  flex: 1;
  height: 22px;
  display: flex;
  align-items: center;
  padding-left: 2px;
  border: 1px solid #d9d9d9;
  color: #111;
}
.sep {
  width: 8px;
  height: 8px;
  margin: 0 8px 0 6px;
  color: #666;
}
.drop {
  margin: 0 2px 0 auto;
  color: #555;
}
.refresh {
  height: 20px;
  padding: 0 2px;
  border-left: 1px solid #d9d9d9;
}
.search {
  width: 202px;
  height: 22px;
  margin-left: 12px;
  display: flex;
  align-items: center;
  padding: 0 5px 0 6px;
  border: 1px solid #d9d9d9;
  color: #666;
}
.search input {
  flex: 1;
}
.search input::placeholder {
  color: #6d6d6d;
}
.content {
  flex: 1;
  min-height: 0;
  display: flex;
}
.tree {
  width: 155px;
  display: flex;
}
.tree ul {
  flex: 1;
  min-width: 0;
  margin: 0;
  padding: 0;
  list-style: none;
  overflow: hidden;
}
.tree li {
  display: flex;
  align-items: center;
  gap: 5px;
  height: 24px;
  padding-left: 32px;
  white-space: nowrap;
}
.tree li.sub {
  padding-left: 40px;
}
.tree li.selected {
  background: #d9d9d9;
}
.tree li svg {
  width: 16px;
  height: 16px;
}
.vscroll {
  width: 16px;
  display: flex;
  flex-direction: column;
  align-items: center;
  padding: 3px 0;
  background: #f0f0f0;
  color: #444;
}
.track {
  flex: 1;
  width: 100%;
  display: flex;
  flex-direction: column;
  align-items: flex-end;
  justify-content: flex-end;
  padding-bottom: 18px;
}
.vscroll .thumb {
  width: 15px;
  height: 33%;
  background: #cdcdcd;
}
.files {
  flex: 1;
  min-width: 0;
  display: flex;
  flex-direction: column;
  padding-left: 5px;
}
table {
  width: 615px;
  table-layout: fixed;
  border-collapse: collapse;
}
th {
  position: relative;
  height: 27px;
  padding: 0 6px;
  border-right: 1px solid #e5e5e5;
  font-weight: normal;
  text-align: left;
  color: #46566e;
}
th.name {
  width: 271px;
  padding-left: 17px;
}
.sort {
  position: absolute;
  left: 50%;
  top: -2px;
  width: 10px;
  height: 10px;
  color: #666;
}
th.date {
  width: 144px;
}
th.type {
  width: 120px;
}
thead::after {
  content: "";
  display: block;
  height: 4px;
}
td {
  height: 21px;
  padding: 0 6px;
  white-space: nowrap;
  color: #6d6d6d;
}
td:first-child {
  padding-left: 18px;
  color: #111;
}
td:last-child {
  padding-right: 7px;
  text-align: right;
}
td svg {
  display: inline-block;
  width: 16px;
  height: 16px;
  margin-right: 4px;
  vertical-align: middle;
}
.hscroll {
  height: 17px;
  margin-top: auto;
  display: flex;
  align-items: center;
  gap: 3px;
  padding: 0 3px 0 2px;
  background: #f0f0f0;
  color: #444;
}
.hscroll .thumb {
  flex: 1;
  height: 15px;
  background: #cdcdcd;
}
.status {
  height: 24px;
  display: flex;
  align-items: center;
  padding: 0 5px 0 14px;
  color: #1e395b;
}
.status span {
  margin-right: auto;
}
.status button {
  width: 22px;
  height: 22px;
  padding: 0 3px;
}
.status .on {
  padding: 0 2px;
  background: #cce8f4;
  border: 1px solid #26a0da;
}
.status svg {
  width: 16px;
  height: 14px;
}

/* taskbar */
.taskbar {
  height: 40px;
  display: flex;
  background: linear-gradient(to right, #001824, #000b1c);
}
.start {
  width: 48px;
  display: flex;
  align-items: center;
  justify-content: center;
}
.tasksearch {
  width: 288px;
  margin-right: 1px;
  display: flex;
  align-items: center;
  padding-left: 12px;
  background: #f2f2f2;
  border: 1px solid #c5c8ca;
  font-size: 14px;
}
.tasksearch svg {
  width: 17px;
  height: 17px;
  margin-right: 8px;
}
.tasksearch input {
  flex: 1;
}
.tasksearch input::placeholder {
  color: #333;
}
.app {
  width: 48px;
  margin-right: 1px;
  display: flex;
  align-items: center;
  justify-content: center;
}
.app svg:not(.i16) {
  width: 24px;
  height: 24px;
}
.running {
  background: #34444f;
  border-bottom: 2px solid #76b9ed;
}
.tray {
  margin-left: auto;
  display: flex;
  align-items: center;
  color: #fff;
}
.tray button {
  width: 24px;
  padding: 0 4px;
}
.tray svg {
  width: 16px;
  height: 16px;
}
.tray time {
  width: 64px;
  text-align: center;
  line-height: 18px;
}
.tray .notify {
  width: 40px;
  padding: 0 12px;
}
.peek {
  width: 4px;
  height: 40px;
  margin-left: 9px;
  border-left: 1px solid #555e68;
}
```
